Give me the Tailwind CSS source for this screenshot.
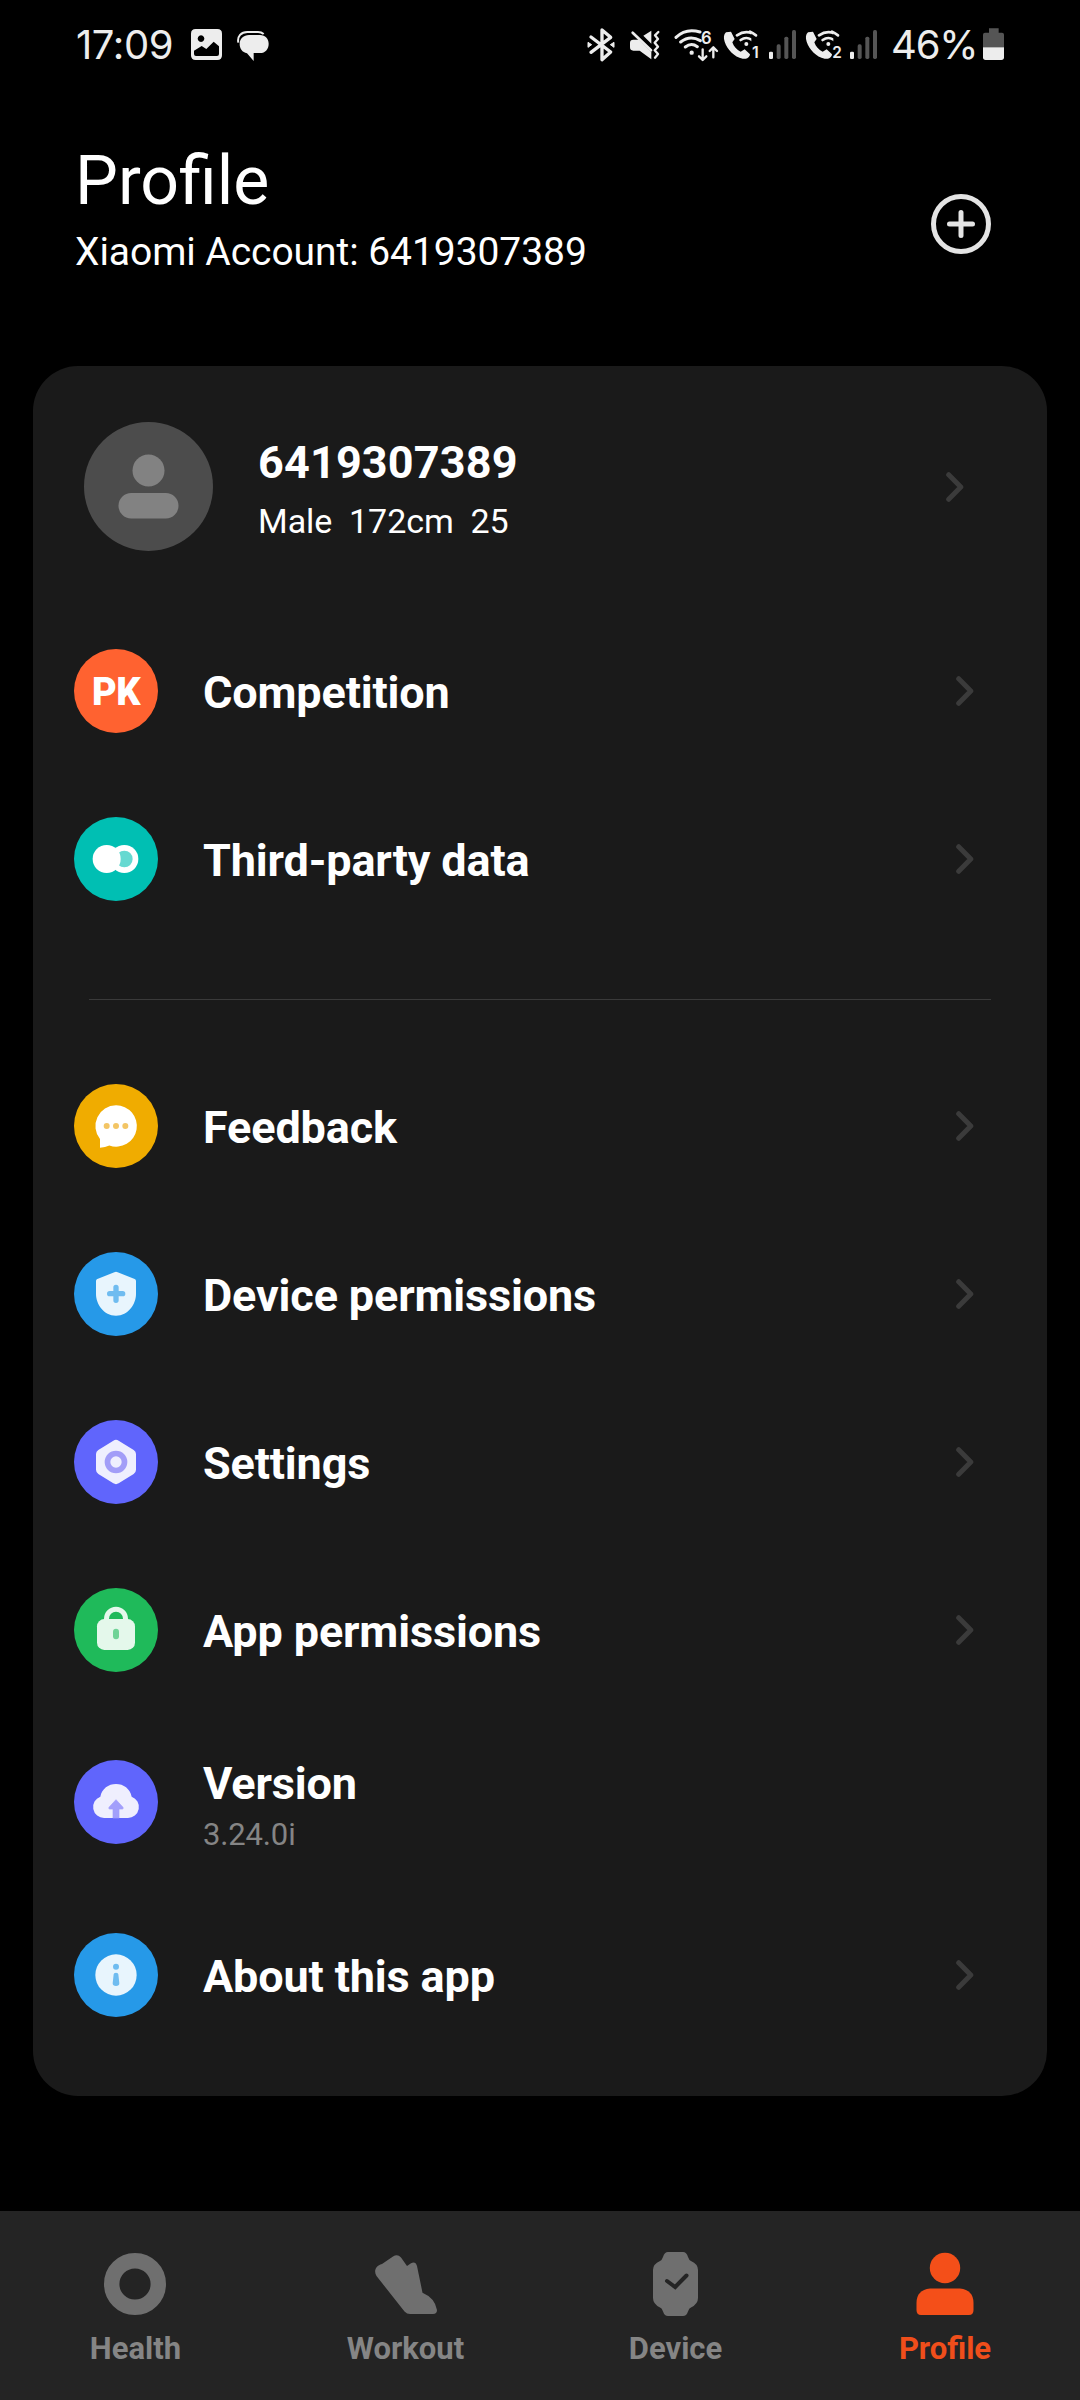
<!DOCTYPE html>
<html lang="en">
<head>
    <meta charset="UTF-8">
    <meta name="viewport" content="width=device-width, initial-scale=1.0">
    <title>Profile</title>

    <!-- Tailwind CSS -->
    <script src="https://cdn.jsdelivr.net/npm/@tailwindcss/browser@4"></script>
</head>
<body class="bg-black">

<!-- Shared shapes -->
<svg class="hidden">
    <symbol id="chevron" viewBox="0 0 18 30">
        <path d="M2.7 2.7L14.8 15L2.7 27.3" fill="none" stroke="#3b3b3b" stroke-width="5" stroke-linecap="round" stroke-linejoin="round"/>
    </symbol>
    <symbol id="wifi-call" viewBox="0 0 84 120">
        <path d="M8 22C1 28 0 38 4 50C12 74 32 95 58 101C66 103 74 100 79 92L80 88L64 73L52 80C40 75 31 64 27 52L34 42L23 20Z" fill="#ededed"/>
        <path d="M41 31Q69 12 98 31M52 45Q69 33 86 45" fill="none" stroke="#ededed" stroke-width="8" stroke-linecap="round"/>
        <circle cx="69" cy="57" r="6" fill="#ededed"/>
    </symbol>
    <symbol id="signal" viewBox="0 0 84 120">
        <rect x="0" y="80" width="12" height="22" rx="4" fill="#ededed"/>
        <rect x="23" y="58" width="12" height="44" rx="5" fill="#555"/>
        <rect x="46" y="35" width="12" height="67" rx="5" fill="#555"/>
        <rect x="69" y="15" width="12" height="87" rx="5" fill="#555"/>
    </symbol>
</svg>

<div class="flex h-[2400px] w-[1080px] flex-col overflow-hidden bg-black font-['Roboto',sans-serif] text-white">

    <!-- Status bar -->
    <div class="flex h-[90px] shrink-0 items-center justify-between pr-[76px] pl-[76px] font-['Inter',sans-serif] text-[#ededed]">
        <div class="flex items-center">
            <span class="w-[115px] text-[40px] leading-[40px] font-normal tracking-[-0.4px]">17:09</span>
            <svg class="h-10 w-[31px]" viewBox="393 45 93 120">
                <path fill="#ededed" fill-rule="evenodd" d="M407 57H472Q486 57 486 71V136Q486 150 472 150H407Q393 150 393 136V71Q393 57 407 57ZM423 76a10 10 0 1 0 .1 0ZM402 122V132Q402 138 408 138H471Q477 138 477 132V109L461 95L439 117L425 108Z"/>
            </svg>
            <svg class="ml-[15px] h-10 w-8" viewBox="533 45 96 120">
                <path fill="#ededed" d="M569 75H602C618 75 628 86 628 101C628 117 618 129 602 129H583V153L563 130C549 127 541 116 541 102C541 86 553 75 569 75Z"/>
                <path fill="none" stroke="#ededed" stroke-width="6" d="M537 98C533 79 546 66 564 66H596Q606 66 613 72"/>
            </svg>
        </div>
        <div class="flex items-center">
            <svg class="h-10 w-[28px]" viewBox="51 45 84 120">
                <path d="M63 81L122 126L96 149V60L122 82L63 127" fill="none" stroke="#ededed" stroke-width="10" stroke-linejoin="round" stroke-linecap="round"/>
                <path d="M54 97L65 104L54 112ZM132 97L121 104L132 112Z" fill="#ededed" stroke="#ededed" stroke-width="3"/>
            </svg>
            <svg class="ml-[15px] h-10 w-[30px]" viewBox="180 45 90 120">
                <path fill="#ededed" d="M220 77L244 62V101ZM190 89H206L244 126V148L209 122H190Q180 122 180 112V98Q180 89 190 89Z"/>
                <path d="M188 68L243 121" stroke="#ededed" stroke-width="8" stroke-linecap="round"/>
                <path d="M265 66L255 76L264 87L254 98L264 110L254 121L264 132L255 143" fill="none" stroke="#ededed" stroke-width="7" stroke-linecap="round" stroke-linejoin="round"/>
            </svg>
            <svg class="ml-[14px] h-10 w-[45px]" viewBox="312 45 135 120">
                <path d="M318 82Q348 53 390 66M332 96Q360 74 391 92M346 111Q364 97 382 110" fill="none" stroke="#ededed" stroke-width="9" stroke-linecap="round"/>
                <circle cx="365" cy="128" r="6.500" fill="#ededed"/>
                <text x="393" y="101" font-size="50" font-weight="600" fill="#ededed">6</text>
                <path d="M398 118V149M387 139L398 150L409 139M430 142V113M419 123L430 112L441 123" fill="none" stroke="#ededed" stroke-width="7" stroke-linecap="round" stroke-linejoin="round"/>
            </svg>
            <svg class="ml-[4px] h-10 w-[38px]" viewBox="459 45 114 120">
                <use href="#wifi-call" x="460" y="45" width="84" height="120"/>
                <path d="M540 65Q550 70 558 76" fill="none" stroke="#ededed" stroke-width="8" stroke-linecap="round"/>
                <text x="546" y="144" font-size="48" font-weight="600" fill="#ededed">1</text>
            </svg>
            <svg class="ml-[8px] h-10 w-[28px]"><use href="#signal" width="28" height="40"/></svg>
            <svg class="ml-[8px] h-10 w-[40px]" viewBox="459 45 120 120">
                <use href="#wifi-call" x="460" y="45" width="84" height="120"/>
                <path d="M540 65Q550 70 558 76" fill="none" stroke="#ededed" stroke-width="8" stroke-linecap="round"/>
                <text x="541" y="145" font-size="46" font-weight="600" fill="#ededed">2</text>
            </svg>
            <svg class="ml-[5px] h-10 w-[28px]"><use href="#signal" width="28" height="40"/></svg>
            <span class="ml-[13px] w-[91px] text-[40px] leading-[40px] font-normal tracking-[-1.2px]">46%</span>
            <svg class="ml-px h-10 w-[21px]" viewBox="579 45 63 120">
                <path fill="#555" d="M597 55H626V68H636Q642 68 642 74V112H579V74Q579 68 585 68H597Z"/>
                <path fill="#ededed" d="M579 112H642V142Q642 150 634 150H587Q579 150 579 142Z"/>
            </svg>
        </div>
    </div>

    <!-- Header -->
    <div class="flex h-[276px] shrink-0 items-start justify-between pr-[89px] pl-[75px]">
        <div>
            <h1 class="mt-[51px] text-[68px] leading-[80px]">Profile</h1>
            <p class="mt-[8px] text-[39px] leading-[46px] tracking-[-0.06px]">Xiaomi Account: 6419307389</p>
        </div>
        <svg class="mt-[104px] size-[60px]" viewBox="0 0 60 60" fill="none" stroke="#e4e4e4" stroke-width="5">
            <circle cx="30" cy="30" r="27.5"/>
            <path d="M18.5 30H41.5M30 18.5V41.5" stroke-linecap="round"/>
        </svg>
    </div>

    <!-- Card -->
    <div class="mx-[33px] shrink-0 rounded-[45px] bg-[#1a1a1a] pb-[37px] text-[45px] font-bold tracking-[-0.15px]">

        <div class="flex h-[241px] items-center pr-[83px] pl-[51px]">
            <svg class="size-[129px]" viewBox="0 0 129 129">
                <circle cx="64.5" cy="64.5" r="64.5" fill="#4c4c4c"/>
                <circle cx="64.5" cy="48.5" r="16" fill="#828282"/>
                <rect x="34.5" y="71" width="60" height="25.5" rx="12.7" fill="#828282"/>
            </svg>
            <div class="ml-[45px] flex-1 pt-[3px]">
                <div class="leading-[53px] tracking-[0.15px]">6419307389</div>
                <div class="mt-[12px] text-[34px] leading-10 font-normal tracking-[-0.05px] whitespace-pre">Male  172cm  25</div>
            </div>
            <svg class="h-[30px] w-[18px]"><use href="#chevron"/></svg>
        </div>

        <div class="flex h-[168px] items-center pr-[73px] pl-[41px]">
            <div class="flex size-[84px] items-center justify-center rounded-full bg-[#ff6230] pt-[2px] text-[38px] font-black tracking-[-0.5px]">PK</div>
            <span class="ml-[45px] flex-1 pt-[3px]">Competition</span>
            <svg class="h-[30px] w-[18px]"><use href="#chevron"/></svg>
        </div>

        <div class="flex h-[168px] items-center pr-[73px] pl-[41px]">
            <svg class="size-[84px]" viewBox="0 0 252 252">
                <circle cx="126" cy="126" r="126" fill="#00bfb3"/>
                <circle cx="151" cy="126" r="42" fill="#fff"/>
                <circle cx="151" cy="126" r="25" fill="#66d9d1"/>
                <circle cx="98" cy="126" r="42" fill="#fff"/>
            </svg>
            <span class="ml-[45px] flex-1 pt-[3px]">Third-party data</span>
            <svg class="h-[30px] w-[18px]"><use href="#chevron"/></svg>
        </div>

        <div class="mt-14 mr-14 mb-[42px] ml-14 h-px bg-[#3a3a3a]"></div>

        <div class="flex h-[168px] items-center pr-[73px] pl-[41px]">
            <svg class="size-[84px]" viewBox="0 0 252 252">
                <circle cx="126" cy="126" r="126" fill="#f0ac00"/>
                <path d="M126 64a62 62 0 1 1 -20 120.500Q94 190 78 191V165A62 62 0 0 1 126 64Z" fill="#fff"/>
                <g fill="#f3c565"><circle cx="98" cy="126" r="9"/><circle cx="126" cy="126" r="9"/><circle cx="154" cy="126" r="9"/></g>
            </svg>
            <span class="ml-[45px] flex-1 pt-[3px]">Feedback</span>
            <svg class="h-[30px] w-[18px]"><use href="#chevron"/></svg>
        </div>

        <div class="flex h-[168px] items-center pr-[73px] pl-[41px]">
            <svg class="size-[84px]" viewBox="0 0 252 252">
                <circle cx="126" cy="126" r="126" fill="#2699e8"/>
                <path d="M121 60.500Q126 58 131 60.500L182 81Q186 83 186 87V126C186 156 163 191 126 191C89 191 66 156 66 126V87Q66 83 70 81Z" fill="#e8f5fd"/>
                <path d="M107 125H146M126 106V145" stroke="#6fbcf0" stroke-width="16" stroke-linecap="round"/>
            </svg>
            <span class="ml-[45px] flex-1 pt-[3px]">Device permissions</span>
            <svg class="h-[30px] w-[18px]"><use href="#chevron"/></svg>
        </div>

        <div class="flex h-[168px] items-center pr-[73px] pl-[41px]">
            <svg class="size-[84px]" viewBox="0 0 252 252">
                <circle cx="126" cy="126" r="126" fill="#6065fc"/>
                <path d="M118 62Q126 57 134 62L179 90Q186 95 186 102V149Q186 157 179 162L134 190Q126 195 118 190L73 162Q66 157 66 149V102Q66 95 73 90Z" fill="#efeffe"/>
                <circle cx="126" cy="126" r="25.500" fill="none" stroke="#a29df8" stroke-width="17"/>
            </svg>
            <span class="ml-[45px] flex-1 pt-[3px]">Settings</span>
            <svg class="h-[30px] w-[18px]"><use href="#chevron"/></svg>
        </div>

        <div class="flex h-[168px] items-center pr-[73px] pl-[41px]">
            <svg class="size-[84px]" viewBox="0 0 252 252">
                <circle cx="126" cy="126" r="126" fill="#1fba5a"/>
                <path d="M97.500 98V92a28.500 28.500 0 0 1 57 0V98" fill="none" stroke="#e4f8eb" stroke-width="15"/>
                <rect x="69" y="93" width="114" height="93" rx="22" fill="#e4f8eb"/>
                <rect x="117" y="122" width="18" height="32" rx="9" fill="#6fd396"/>
            </svg>
            <span class="ml-[45px] flex-1 pt-[3px]">App permissions</span>
            <svg class="h-[30px] w-[18px]"><use href="#chevron"/></svg>
        </div>

        <div class="flex h-44 items-center pr-[73px] pl-[41px]">
            <svg class="size-[84px]" viewBox="0 0 252 252">
                <circle cx="126" cy="126" r="126" fill="#6065fc"/>
                <path d="M91 174A33 33 0 0 1 79 110C84 86 103 72 126 72C149 72 168 86 173 110A33 33 0 0 1 161 174Z" fill="#efeffe"/>
                <path d="M126 119L147 142Q149 147 145 147H135V174H117V147H107Q103 147 105 142Z" fill="#a29ffb" stroke="#a29ffb" stroke-width="2" stroke-linejoin="round"/>
            </svg>
            <div class="ml-[45px] flex-1 pt-[6px]">
                <div class="leading-[53px]">Version</div>
                <div class="mt-[7px] text-[31px] leading-[36px] font-normal text-[#858585]">3.24.0i</div>
            </div>
        </div>

        <div class="mt-px flex h-[168px] items-center pr-[73px] pl-[41px]">
            <svg class="size-[84px]" viewBox="0 0 252 252">
                <circle cx="126" cy="126" r="126" fill="#2699e8"/>
                <circle cx="126" cy="126" r="62" fill="#e8f5fd"/>
                <circle cx="126" cy="101" r="9" fill="#6fbcf0"/>
                <path d="M119 124Q119 119 126 119Q133 119 133 124L136 151Q136 159 126 159Q116 159 116 151Z" fill="#6fbcf0"/>
            </svg>
            <span class="ml-[45px] flex-1 pt-[3px]">About this app</span>
            <svg class="h-[30px] w-[18px]"><use href="#chevron"/></svg>
        </div>
    </div>

    <!-- Bottom navigation -->
    <div class="mt-auto grid h-[189px] shrink-0 grid-cols-4 bg-[#242424] pt-[41px] text-[31px] leading-[36px] font-bold text-[#858585]">
        <div class="flex flex-col items-center">
            <svg class="size-16" viewBox="0 0 64 64"><circle cx="32" cy="32" r="23.300" fill="none" stroke="#6f6f6f" stroke-width="15.400"/></svg>
            <span class="mt-[15px] pl-px">Health</span>
        </div>
        <div class="flex flex-col items-center">
            <svg class="size-16" viewBox="0 0 64 64"><path fill="#6f6f6f" d="M3.500 24C0.500 19 2.500 14 9 12L20 4.500Q24.500 1.500 28 5.500L34 14L38 11.200Q42.500 9 44 14L49.500 40.700Q62 46 64 58Q64 62 60 62H37Q34 62 31.500 59.500Z"/></svg>
            <span class="mt-[15px] pl-px">Workout</span>
        </div>
        <div class="flex flex-col items-center">
            <svg class="size-16" viewBox="0 0 64 64">
                <path fill="#6f6f6f" d="M25 0H40Q43.500 0 45 5Q46 8 48 9Q55 12 55 18V46Q55 52 48 55.500Q46 56 45 59.500Q43.500 64 40 64H25Q21.500 64 20 59.500Q19 56 17 55.500Q10 52 10 46V18Q10 12 17 9Q19 8 20 5Q21.500 0 25 0Z"/>
                <path d="M24 29L32.200 35L43.500 23.500" fill="none" stroke="#242424" stroke-width="4" stroke-linecap="round"/>
            </svg>
            <span class="mt-[15px] pl-px">Device</span>
        </div>
        <div class="flex flex-col items-center text-[#f04e1b]">
            <svg class="size-16" viewBox="0 0 64 64" fill="#f44f19">
                <circle cx="32" cy="16" r="15.200"/>
                <path d="M17 36.500H47Q60.500 38 60.500 51V58Q60.500 63 56 63H8Q3.500 63 3.500 58V51Q3.500 38 17 36.500Z"/>
            </svg>
            <span class="mt-[15px]">Profile</span>
        </div>
    </div>
</div>

</body>
</html>
